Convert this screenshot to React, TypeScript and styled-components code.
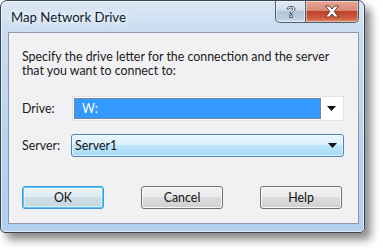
import React from "react";
import styled, { createGlobalStyle } from "styled-components";

const Global = createGlobalStyle`
  html, body { margin: 0; padding: 0; background: #ffffff; }
  body { font-family: Lato, "Noto Sans", sans-serif; }
`;

const Page = styled.div`
  width: 383px;
  height: 250px;
  background: #ffffff;
  overflow: hidden;
`;

const Window = styled.div`
  box-sizing: border-box;
  width: 365px;
  height: 233px;
  border: 1px solid #3a4655;
  border-radius: 7px 7px 5px 5px;
  background: linear-gradient(to bottom, #dbe7f5 0%, #c9dcf1 14%, #b9d3ee 60%, #b2cfee 100%);
  box-shadow: inset 0 0 0 1px rgba(255, 255, 255, 0.55), 6px 7px 9px rgba(0, 0, 0, 0.45);
  padding: 0 5px 8px 7px;
  display: flex;
  flex-direction: column;
`;

const TitleBar = styled.div`
  height: 31px;
  display: flex;
  justify-content: space-between;
  align-items: flex-start;
`;

const Title = styled.div`
  margin-top: 8px;
  margin-left: 3px;
  font-size: 13.2px;
  color: #0c1a2c;
  text-shadow: 0 0 6px #ffffff, 0 0 10px #ffffff;
  white-space: nowrap;
`;

const Caption = styled.div`
  display: flex;
`;

const CapButton = styled.div<{ $close?: boolean }>`
  box-sizing: border-box;
  height: 22px;
  width: ${(p) => (p.$close ? "53px" : "31px")};
  border: 1px solid #4b5a6c;
  border-top: none;
  ${(p) => (p.$close ? "border-left: none;" : "")}
  border-radius: ${(p) => (p.$close ? "0 0 5px 0" : "0 0 0 5px")};
  background: ${(p) =>
    p.$close
      ? "linear-gradient(to bottom, #e8a593 0%, #d98a78 45%, #c0422b 50%, #cc5a3e 80%, #e08a60 100%)"
      : "linear-gradient(to bottom, #e2ebf4 0%, #cfdceb 45%, #b3c5d9 50%, #bccee0 85%, #d1e0ef 100%)"};
  box-shadow: inset 0 0 0 1px rgba(255, 255, 255, 0.45);
  display: flex;
  align-items: center;
  justify-content: center;
`;

const Panel = styled.div`
  flex: 1;
  box-sizing: border-box;
  border: 1px solid #8d98a8;
  background: #f1f0f3;
  padding: 17px 14px 0 13px;
  display: flex;
  flex-direction: column;
`;

const IntroLine = styled.div`
  font-size: 12.4px;
  line-height: 14px;
  height: 14px;
  color: #1a1a1a;
  white-space: nowrap;
`;

const Form = styled.div`
  margin-top: 18px;
  display: grid;
  grid-template-columns: 50px 272px;
  grid-template-rows: 25px 23px;
  row-gap: 13px;
  align-items: center;
`;

const Label = styled.div`
  font-size: 12.4px;
  color: #1a1a1a;
`;

const EditCombo = styled.div`
  box-sizing: border-box;
  height: 25px;
  border: 1px solid #e1e3e8;
  background: #ffffff;
  padding: 1px;
  display: flex;
  align-items: stretch;
`;

const Selection = styled.div`
  flex: 1;
  box-sizing: border-box;
  background: #3399ff;
  border: 1px dotted #b5732e;
  color: #ffffff;
  font-size: 12.4px;
  padding-left: 7px;
  display: flex;
  align-items: center;
`;

const ArrowCell = styled.div`
  width: 21px;
  display: flex;
  align-items: center;
  justify-content: center;
`;

const ListCombo = styled.div`
  box-sizing: border-box;
  height: 23px;
  margin-left: -1px;
  border: 1px solid #4a86bd;
  border-radius: 3px;
  background: linear-gradient(to bottom, #eaf6fd 0%, #d9f0fc 45%, #bee6fd 50%, #a7d9f5 100%);
  box-shadow: inset 0 0 0 1px rgba(255, 255, 255, 0.6);
  display: flex;
  align-items: center;
  font-size: 12.4px;
  color: #111111;
  padding-left: 3px;
`;

const ComboText = styled.div`
  flex: 1;
`;

const Buttons = styled.div`
  margin-top: 29px;
  display: flex;
  gap: 37px;
`;

const Btn = styled.div<{ $default?: boolean }>`
  box-sizing: border-box;
  width: 82px;
  height: 23px;
  border-radius: 3px;
  border: 1px solid ${(p) => (p.$default ? "#3c9ee0" : "#707070")};
  background: ${(p) =>
    p.$default
      ? "linear-gradient(to bottom, #eaf3f8 0%, #e0ecf3 45%, #cfdee7 50%, #c6d6df 100%)"
      : "linear-gradient(to bottom, #f2f2f2 0%, #ebebeb 45%, #dddddd 50%, #cfcfcf 100%)"};
  box-shadow: ${(p) =>
    p.$default
      ? "inset 0 0 0 1px #58c8f6, inset 0 0 0 2px rgba(255,255,255,0.5)"
      : "inset 0 0 0 1px rgba(255,255,255,0.8)"};
  font-size: 12.4px;
  color: #111111;
  display: flex;
  align-items: center;
  justify-content: center;
`;

const Arrow = () => (
  <svg width="9" height="5" viewBox="0 0 9 5">
    <path d="M0 0 H9 L4.5 5 Z" fill="#111" />
  </svg>
);

const HelpGlyph = () => (
  <svg width="12" height="15" viewBox="0 0 12 15">
    <path
      d="M2 5 C2 1.5 10 1.5 10 5 C10 7.5 7 7.5 7 9.5 L5 9.5 C5 6.5 8 6.5 8 5 C8 3.5 4 3.5 4 5 Z"
      fill="#ffffff"
      stroke="#3b4a5c"
      strokeWidth="0.9"
      strokeLinejoin="round"
    />
    <rect x="4.8" y="11" width="2.4" height="2.4" fill="#ffffff" stroke="#3b4a5c" strokeWidth="0.9" />
  </svg>
);

const CloseGlyph = () => (
  <svg width="16" height="13" viewBox="0 0 16 13">
    <path
      d="M1.5 1 H5.5 L8 4 L10.5 1 H14.5 L10.2 6.5 L14.5 12 H10.5 L8 9 L5.5 12 H1.5 L5.8 6.5 Z"
      fill="#ffffff"
      stroke="#5a2a22"
      strokeWidth="0.9"
      strokeLinejoin="round"
    />
  </svg>
);

export default function App() {
  return (
    <Page>
      <Global />
      <Window>
        <TitleBar>
          <Title>Map Network Drive</Title>
          <Caption>
            <CapButton>
              <HelpGlyph />
            </CapButton>
            <CapButton $close>
              <CloseGlyph />
            </CapButton>
          </Caption>
        </TitleBar>
        <Panel>
          <IntroLine>Specify the drive letter for the connection and the server</IntroLine>
          <IntroLine>that you want to connect to:</IntroLine>
          <Form>
            <Label>Drive:</Label>
            <EditCombo>
              <Selection>W:</Selection>
              <ArrowCell>
                <Arrow />
              </ArrowCell>
            </EditCombo>
            <Label>Server:</Label>
            <ListCombo>
              <ComboText>Server1</ComboText>
              <ArrowCell>
                <Arrow />
              </ArrowCell>
            </ListCombo>
          </Form>
          <Buttons>
            <Btn $default>OK</Btn>
            <Btn>Cancel</Btn>
            <Btn>Help</Btn>
          </Buttons>
        </Panel>
      </Window>
    </Page>
  );
}
